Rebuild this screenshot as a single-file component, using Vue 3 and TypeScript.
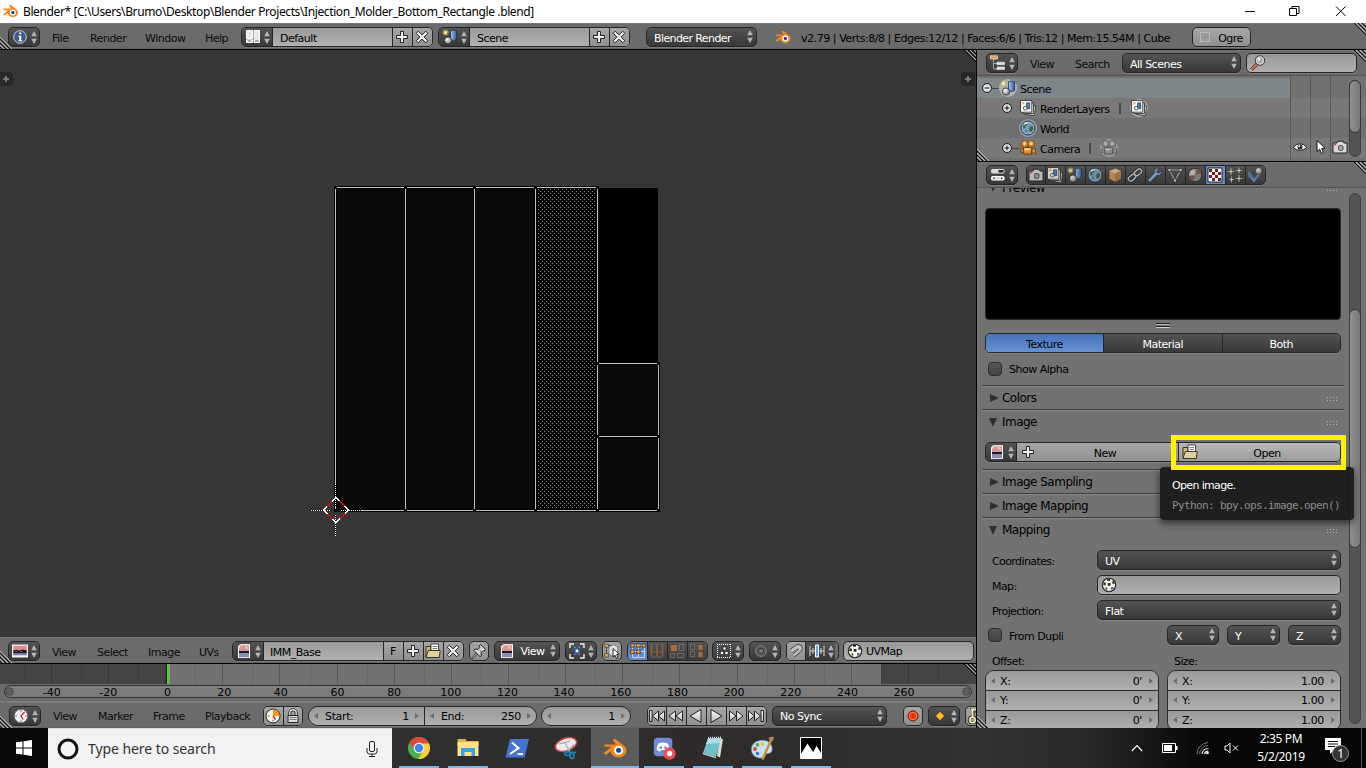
<script setup lang="ts">
import { h, type FunctionalComponent } from 'vue'

const Ic: FunctionalComponent<{ n: string }> = (props) =>
  h('svg', { class: ['ic', 'ic-' + props.n], viewBox: '0 0 16 16' }, [h('use', { href: '#' + props.n })])
Ic.props = ['n']

const Ud: FunctionalComponent = () =>
  h('svg', { class: 'ud', viewBox: '0 0 6 13' }, [h('path', { d: 'M3 0L5.8 5.2H.2zM3 13L5.8 7.8H.2z', fill: '#b4b4b4' })])

const infoMenus = ['File', 'Render', 'Window', 'Help']
const uvMenus = ['View', 'Select', 'Image', 'UVs']
const timeMenus = ['View', 'Marker', 'Frame', 'Playback']
const propTabs = ['photocam', 'layers', 'scene', 'world', 'cube', 'chain', 'wrench', 'mesh', 'material', 'texture', 'particles', 'physics']
const transport = ['first', 'rew', 'back', 'play', 'fwd', 'last']
const axes = ['X', 'Y', 'Z']

const frameX = (f: number) => 166.7 + f * 2.857
const labelX = (f: number) => 167.5 + f * 2.833 - (f < 0 ? 2.5 : 0)
const labels = Array.from({ length: 16 }, (_, i) => -40 + i * 20)
const minorFrames = Array.from({ length: 17 }, (_, i) => -50 + i * 20)

const vLines = [[335, 187, 510], [405, 187, 510], [474, 187, 510], [535, 187, 510], [597, 187, 510], [658, 363, 510]]
const hLines = [[187, 335, 597], [510, 335, 658], [363, 597, 658], [436, 597, 658]]
const verts = [
  [335, 187], [405, 187], [474, 187], [535, 187], [597, 187],
  [335, 510], [405, 510], [474, 510], [535, 510], [597, 510], [658, 510],
  [597, 363], [658, 363], [597, 436], [658, 436],
]

const apps = [
  { n: 'chrome', open: true }, { n: 'explorer', open: true }, { n: 'shell', open: false },
  { n: 'snip', open: false }, { n: 'blender', open: true, active: true }, { n: 'discord', open: true },
  { n: 'notepad', open: true }, { n: 'paint', open: true }, { n: 'photos', open: true },
]
</script>

<template>
  <div class="screen">
    <svg class="defs" width="0" height="0">
      <defs>
        <linearGradient id="gw" x1="0" y1="0" x2="0" y2="1"><stop offset="0" stop-color="#fff" /><stop offset="1" stop-color="#bbb" /></linearGradient>
        <linearGradient id="gb" x1="0" y1="0" x2="1" y2="0"><stop offset="0" stop-color="#a9c8f0" /><stop offset="1" stop-color="#2b5c9e" /></linearGradient>
        <linearGradient id="go" x1="0" y1="0" x2="0" y2="1"><stop offset="0" stop-color="#f7b45c" /><stop offset="1" stop-color="#c8741e" /></linearGradient>
        <radialGradient id="gs" cx=".35" cy=".3" r=".8"><stop offset="0" stop-color="#fff" /><stop offset="1" stop-color="#777" /></radialGradient>
        <pattern id="stipple" width="4" height="4" patternUnits="userSpaceOnUse" x="2" y="1">
          <rect width="1" height="1" fill="#8c8c8c" /><rect x="2" y="2" width="1" height="1" fill="#8c8c8c" />
        </pattern>
      </defs>
      <symbol id="blender" viewBox="0 0 16 16">
        <path d="M6.4 2.600 8 1.800 13.400 6C15 7.200 15.600 8.300 15.600 9.600c0 2.700-2.300 4.600-5.200 4.600-2.800 0-4.900-1.600-5.200-3.900L1.900 12.600.5 11.400 5.600 7.200H1V5.600h7.700z" fill="#f5861f" />
        <circle cx="10.400" cy="9.500" r="3" fill="#fff" /><circle cx="10.400" cy="9.500" r="1.700" fill="#1a4f8c" />
      </symbol>
      <symbol id="info" viewBox="0 0 16 16">
        <circle cx="8" cy="8" r="6.300" fill="#3d5a94" stroke="#c8cfdb" stroke-width="1" />
        <path d="M7 3.200h2.500v2.200H7zM6 6.500h3.500v4.500h1v1.500h-4.500V11H7V8H6z" fill="#fff" stroke="#111" stroke-width=".3" />
      </symbol>
      <symbol id="screens" viewBox="0 0 16 16">
        <path d="M1.500 1.500h6v8h-6zM9 1.500h5.500v12H9zM1.500 10.800h6v2.700h-6z" fill="#e9e9e4" stroke="#fff" /><path d="M3 12h3M10 12h3.500" stroke="#666" />
      </symbol>
      <symbol id="plus" viewBox="0 0 16 16"><path d="M6.500 2.500h3v4h4v3h-4v4h-3v-4h-4v-3h4z" fill="#eee" stroke="#222" /></symbol>
      <symbol id="cross" viewBox="0 0 16 16"><path d="M4.300 2.200 8 5.900l3.700-3.700 2.100 2.100L10.100 8l3.700 3.700-2.100 2.100L8 10.100l-3.700 3.700-2.100-2.100L5.900 8 2.200 4.300z" fill="#eee" stroke="#222" /></symbol>
      <symbol id="scene" viewBox="0 0 16 16">
        <path d="M8.500 1.800q3-1.400 6 0v8.700q-3 2-6 0z" fill="url(#gb)" stroke="#1d3558" stroke-width=".8" />
        <circle cx="3.500" cy="3.500" r="3" fill="#d9cd4a" opacity=".55" /><circle cx="3.500" cy="3.500" r="1.500" fill="#fff6a0" />
        <circle cx="6" cy="11.500" r="3.600" fill="url(#gs)" stroke="#222" stroke-width=".8" />
      </symbol>
      <symbol id="tree" viewBox="0 0 16 16">
        <path d="M3.500 4v10H8M3.500 8.500H8" fill="none" stroke="#9aa" /><path d="M.5.8h7v3.200h-7z" fill="#e79a4c" stroke="#ffe0b8" stroke-width=".7" />
        <path d="M7 7.200h7.500v2.600H7zM7 12h7.500v2.600H7z" fill="#ddd" stroke="#fff" stroke-width=".5" />
      </symbol>
      <symbol id="mag" viewBox="0 0 16 16">
        <path d="M7 9 1.500 14.600" stroke="#5a2c14" stroke-width="3.400" /><path d="M7 9 1.700 14.400" stroke="#c98058" stroke-width="2" />
        <circle cx="10" cy="5.500" r="4.700" fill="#c9c9c9" stroke="#333" /><circle cx="10" cy="5.500" r="3.600" fill="#a9a9a9" stroke="#eee" stroke-width=".8" /><circle cx="9" cy="4.500" r="1.200" fill="#fff" />
      </symbol>
      <symbol id="layers" viewBox="0 0 16 16">
        <path d="M6.500 5l9 1-1 9.500-9-1z" fill="#e8e8d8" stroke="#222" stroke-width=".8" /><path d="M3 2.800h10.500v10.700H3z" fill="#eee" stroke="#222" stroke-width=".8" />
        <path d="M.6.600h11.200v11.600H.6z" fill="#fff" stroke="#222" stroke-width=".8" /><path d="M6.500 2.800h3.300v6H6.500z" fill="#4b7dbb" stroke="#123" stroke-width=".6" />
        <circle cx="5.200" cy="8.200" r="1.900" fill="#eee" stroke="#123" stroke-width=".7" /><circle cx="3.300" cy="3.300" r="1.200" fill="#e9b53a" />
      </symbol>
      <symbol id="world" viewBox="0 0 16 16">
        <circle cx="8" cy="8" r="7" fill="#a9bed6" stroke="#222c3c" /><circle cx="8" cy="8" r="5.500" fill="#6f9bca" />
        <path d="M3 6q1-3.500 5-3l-1 2-2 1 .5 2-2 .5zM9.500 7l3-1.500 1 3.500-2.500 3.200L9 10zM5 10l2 1v2z" fill="#3c6b2a" /><path d="M4 4.500q2-2 4-1.500" stroke="#fff" stroke-width="1.200" fill="none" />
      </symbol>
      <symbol id="camera" viewBox="0 0 16 16">
        <circle cx="4.600" cy="4" r="3.500" fill="url(#go)" stroke="#6b3a08" stroke-width=".8" /><circle cx="11.200" cy="4" r="3.500" fill="url(#go)" stroke="#6b3a08" stroke-width=".8" />
        <path d="M3.500 7.500h8v6.700h-8z" fill="url(#go)" stroke="#6b3a08" stroke-width=".8" /><path d="M12 10l3.500-1.800v6L12 12.500zM3 9.500 .8 8.700v4L3 12" fill="url(#go)" stroke="#6b3a08" stroke-width=".8" />
        <circle cx="4.600" cy="4" r="1.100" fill="#fff0c8" /><circle cx="11.200" cy="4" r="1.100" fill="#fff0c8" /><path d="M5 9.500h4" stroke="#fff0c8" />
      </symbol>
      <symbol id="eye" viewBox="0 0 16 16"><path d="M1 8.500Q8 1 15 8.500 8 14 1 8.500z" fill="#f2f2f2" stroke="#222" /><circle cx="8" cy="8" r="2.500" fill="#333" /><circle cx="7.300" cy="7.200" r=".9" fill="#fff" /></symbol>
      <symbol id="cursor" viewBox="0 0 16 16"><path d="M5 1.500v11l2.600-2.300 1.800 4.300 2-1-1.800-4 3.400-.4z" fill="#fff" stroke="#111" /></symbol>
      <symbol id="photocam" viewBox="0 0 16 16">
        <path d="M1 4h4l1-1.800h5L12 4h3v10H1z" fill="#d8d8d8" stroke="#222" /><circle cx="8.700" cy="9" r="3.700" fill="#555" stroke="#eee" /><circle cx="8.700" cy="9" r="2" fill="#aaa" /><path d="M2.200 5.500h2" stroke="#b33" stroke-width="1.500" />
      </symbol>
      <symbol id="props" viewBox="0 0 16 16"><rect x="1" y="2" width="13.500" height="4.500" rx="1.800" fill="#ddd" /><rect x="8.500" y="3" width="5" height="2.500" fill="#222" /><rect x="1" y="9" width="13.500" height="4.500" rx="1.800" fill="#fff" /><path d="M4.500 10 2.500 11.200l2 1.300zM11 10l2 1.200-2 1.300z" fill="#222" /><path d="M5 10h5.500v2.500H5z" fill="#ddd" /></symbol>
      <symbol id="cube" viewBox="0 0 16 16"><path d="M2 4 8.500 1.500 14 4v8l-6 3-6-3z" fill="#d2965a" stroke="#56341a" stroke-width=".8" /><path d="M2 4 8 6.500 14 4 8.500 1.500z" fill="#ecc08c" /><path d="M8 6.500 14 4v8l-6 3z" fill="#b57c46" /></symbol>
      <symbol id="chain" viewBox="0 0 16 16"><g fill="none" stroke="#222" stroke-width="3.300"><rect x="7" y="3" width="8" height="4.600" rx="2.300" transform="rotate(-40 11 5.300)" /><rect x="1" y="8.400" width="8" height="4.600" rx="2.300" transform="rotate(-40 5 10.700)" /></g><g fill="none" stroke="#c8c8c8" stroke-width="1.500"><rect x="7" y="3" width="8" height="4.600" rx="2.300" transform="rotate(-40 11 5.300)" /><rect x="1" y="8.400" width="8" height="4.600" rx="2.300" transform="rotate(-40 5 10.700)" /></g></symbol>
      <symbol id="wrench" viewBox="0 0 16 16"><path d="M14.500 3.500 12 6 10 5.800 9.800 3.800 12.200 1.300Q8.800.500 7.500 3q-.6 1.500 0 3L1 12.500q-.5 1.800 1.500 2.300.6.200 1.200-.3L10 8.300q4.800.8 4.500-4.800z" fill="#8fb0d8" stroke="#1f3450" stroke-width=".8" /></symbol>
      <symbol id="mesh" viewBox="0 0 16 16"><path d="M2.500 3H13.500L8 13.500z" fill="none" stroke="#b0b0b0" stroke-width="1.100" /><path d="M1 1.500h3v3H1zM12 1.500h3v3h-3zM6.500 12h3v3h-3z" fill="#ddd" stroke="#222" stroke-width=".7" /></symbol>
      <symbol id="material" viewBox="0 0 16 16"><circle cx="8" cy="8" r="6.700" fill="#b1a6a4" stroke="#222" /><path d="M8.500 8 9 1.500A6.300 6.300 0 0 1 14.300 7zM8.500 8 7 14.300A6.300 6.300 0 0 1 1.700 9z" fill="#7b5a56" /><path d="M8.500 8 14.300 8A6.300 6.300 0 0 1 8 14.300z" fill="#8e8a8a" /><circle cx="5.500" cy="5.500" r="2.300" fill="#e3d9d7" opacity=".8" /></symbol>
      <symbol id="texture" viewBox="0 0 16 16"><path d="M1 1h14v14H1z" fill="#fff" stroke="#222" /><path d="M2 2h3v3H2zM8 2h3v3H8zM5 5h3v3H5zM11 5h3v3h-3zM2 8h3v3H2zM8 8h3v3H8zM5 11h3v3H5zM11 11h3v3h-3z" fill="#7c1c18" /></symbol>
      <symbol id="particles" viewBox="0 0 16 16"><g stroke="#c6b48c" stroke-width="1.100"><path d="M4 1v7M.5 4.500h7M12 .5v6M9 3.500h6M4.500 9.500v6M2 12.500h5M12 8v7M8.500 11.500h7" /></g><g fill="#eee"><circle cx="4" cy="4.500" r="1" /><circle cx="12" cy="3.500" r="1" /><circle cx="4.500" cy="12.500" r="1" /><circle cx="12" cy="11.500" r="1" /></g></symbol>
      <symbol id="physics" viewBox="0 0 16 16"><path d="M1.500 5 7 13.500 13 6" fill="none" stroke="#5f84b5" stroke-width="2.500" /><path d="M1 8.500 7 14" stroke="#88a7d0" /><circle cx="11.800" cy="4" r="3.300" fill="url(#gs)" stroke="#333" stroke-width=".6" /></symbol>
      <symbol id="imgwide" viewBox="0 0 16 16"><path d="M0 1.500h16v13H0z" fill="#f4eeee" /><path d="M1.200 2.700h13.600v5H1.200z" fill="#dc8e8a" /><path d="M1.200 7.500l3-.7 3 .8 4-1 3.600.8v2.600H1.200z" fill="#16162a" /><path d="M1.200 10h13.600v2.200H1.200z" fill="#787ba6" /><path d="M3 8.500h2M8 8.500h2" stroke="#b14c52" /></symbol>
      <symbol id="image" viewBox="0 0 16 16"><path d="M4.500.7h10v14.600h-13V4z" fill="#fff" stroke="#222" stroke-width=".7" /><path d="M5.200 2.200h7.800V8H3V5z" fill="#dc9793" /><path d="M3 8h10v2.400H3z" fill="#1b1830" /><path d="M3 10.400h10V14H3z" fill="#8b8db8" /><path d="M1.500 4l3-3.300V4z" fill="#fff" stroke="#888" stroke-width=".4" /><path d="M9 4h2v2" stroke="#f8ddd6" fill="none" /></symbol>
      <symbol id="folder" viewBox="0 0 16 16"><path d="M1 3.500h5v11H1z" fill="#c9b97d" stroke="#3b3520" /><path d="M6 1h7.500v8H6z" fill="#fff" stroke="#222" stroke-width=".8" /><path d="M7.500 3.500h4.500M7.500 5.500h4.500" stroke="#555" stroke-width=".8" /><path d="M3.300 7.500h11.900l-.9 7H1z" fill="#dfd29c" stroke="#3b3520" /></symbol>
      <symbol id="pin" viewBox="0 0 16 16"><path d="M7.500 9 1 15.500" stroke="#222" stroke-width="2" /><path d="M7.500 9 1.500 15" stroke="#ddd" /><path d="M9.500 1.500 14.800 6.500 13 8l-1-.3-2 2 .4 3L9 13.500 2.800 7.500 4 6l3 .4 2-2.200-.9-1z" fill="#d6d6d6" stroke="#222" /><path d="M8 6.500 10.500 9" stroke="#777" /></symbol>
      <symbol id="pivot" viewBox="0 0 16 16"><path d="M1 5V1h4M11 1h4v4M15 11v4h-4M5 15H1v-4" fill="none" stroke="#eee" stroke-width="1.400" /><circle cx="8" cy="8" r="2.300" fill="#fff" stroke="#2c64b5" stroke-width="1.800" /><path d="M5 4.500h1.500M9.500 4.500H11M5 11.500h1.500M9.500 11.500H11" stroke="#999" /></symbol>
      <symbol id="sync" viewBox="0 0 16 16"><path d="M5 4 9 1.500l4.500 2V11L9 13.500 5 11z" fill="#e2e2e2" stroke="#777" stroke-width=".8" /><path d="M2.500 4v9M4 2.500h4" stroke="#555" /><path d="M.8 1h3.500v3.500H.8zM.8 10.500h3.500V14H.8z" fill="#f6a850" stroke="#543" stroke-width=".8" /><path d="M9 5.500v8.500l2-1.800 1.500 3.200 1.600-.7-1.400-3.200 2.600-.3z" fill="#fff" stroke="#111" stroke-width=".9" /></symbol>
      <symbol id="mvert" viewBox="0 0 16 16"><path d="M2.500 2.500v12h12v-12zM2.500 8.500h12M8.500 2.500v12" fill="none" stroke="#c3d3ee" stroke-width="1" /><path d="M.7.700h3.500v3.500H.7zM6.700.700h3.500v3.500H6.700zM12.300.700h3v3.500h-3zM.7 7h3.500v3.500H.7zM6.700 7h3.500v3.500H6.700z" fill="#f6a04c" stroke="#4c2b0c" stroke-width=".8" /></symbol>
      <symbol id="medge" viewBox="0 0 16 16"><path d="M2 14h12M2 9h12" fill="none" stroke="#777" /><path d="M2.500 1v12M8 1v12M13.500 1v12" stroke="#9c623c" stroke-width="1.700" /></symbol>
      <symbol id="mface" viewBox="0 0 16 16"><path d="M1.500 10.500h4v4h-4zM10.500 1.500h4v6h-4zM8.500 10.500h6v4h-6z" fill="#454545" stroke="#777" /><path d="M1.500 1.500h7v7h-7z" fill="#b07a48" stroke="#684329" /></symbol>
      <symbol id="misle" viewBox="0 0 16 16"><path d="M1.500 1.500h4v5h-4zM1.500 8.500h4v5h-4z" fill="#454545" stroke="#777" /><path d="M9 1.500h5v6H9zM9 8.500h5v6H9z" fill="#b07a48" stroke="#684329" /></symbol>
      <symbol id="sticky" viewBox="0 0 16 16"><path d="M1 1.500h14M1 14.500h14M1.500 1v14M14.500 1v14" fill="none" stroke="#fff" stroke-dasharray="1 1" /><path d="M7 4h3v3H7zM4.500 8.500h3v3h-3zM9 8.500h3v3H9z" fill="#fff" stroke="#111" stroke-width=".6" /></symbol>
      <symbol id="prop" viewBox="0 0 16 16"><circle cx="8" cy="8" r="5.500" fill="#5e5e5e" stroke="#7a7a7a" /><circle cx="8" cy="8" r="2.700" fill="#777" stroke="#393939" /></symbol>
      <symbol id="magnet" viewBox="0 0 16 16"><path d="M2 6.500 7.500 2.300Q12-.2 14 3.500q1.400 3.500-2 6L6.500 14" fill="none" stroke="#444" stroke-width="1" /><path d="M3.300 8 8.500 4.300Q11 2.800 12 4.800q.7 1.800-1.300 3.300L5.500 12" fill="none" stroke="#c2c2c2" stroke-width="2.600" /><path d="M4.500 9.500 9 6.300q1.300-.7 1.500 0 0 .7-.7 1.300L5 11" fill="none" stroke="#555" stroke-width=".8" /></symbol>
      <symbol id="incr" viewBox="0 0 16 16"><path d="M.5 8h15M1 3v10M4 5v6M12 5v6M15 3v10" stroke="#ccc" stroke-width="1.100" /><path d="M6.500 2h3v12h-3z" fill="#64a0ef" stroke="#fff" /></symbol>
      <symbol id="ball" viewBox="0 0 16 16"><circle cx="8" cy="8" r="6.700" fill="#faf7e8" stroke="#222" stroke-width="1.100" /><path d="M6 2h3v1.800H6zM2.500 5.500h2.300v2.700H2.300zM6.700 6h2.800v2.800H6.700zM11.300 4.200h1.700l.8 2.600h-2.500zM4.200 10.500h2v2.200L4.800 12.200zM10.200 10.300h2.300l-1.300 2.200h-1z" fill="#262a33" /><path d="M13.500 9.500q-1.500 4-5 4.300" stroke="#7ba2d8" stroke-width="1" fill="none" /></symbol>
      <symbol id="clock" viewBox="0 0 16 16"><circle cx="8" cy="8" r="6.800" fill="#f2f2f2" stroke="#666" /><path d="M8 2.300v1.500M8 12.200v1.500M2.300 8h1.500M12.200 8h1.500" stroke="#555" /><path d="M11.500 4 8 8l2 3.500" fill="none" stroke="#c22" stroke-width="1.300" /></symbol>
      <symbol id="clockpie" viewBox="0 0 16 16"><circle cx="8" cy="8" r="7" fill="#f6f1e7" stroke="#222" /><path d="M8 8V1.400A6.600 6.600 0 0 1 14.600 8z" fill="#f5961c" /><path d="M3 8h1.500M8 12v1.500" stroke="#555" /><path d="M8 8l2.500 3.500" stroke="#c22" stroke-width="1.300" /></symbol>
      <symbol id="lock" viewBox="0 0 16 16"><path d="M4.800 8V5a3.200 3.200 0 0 1 6.400 0v3" fill="none" stroke="#222" stroke-width="3" /><path d="M4.800 8V5a3.200 3.200 0 0 1 6.400 0v3" fill="none" stroke="#ddd" stroke-width="1.400" /><path d="M3 7.500h10v7H3z" fill="#ddd" stroke="#222" /><path d="M4.500 9.500h7M4.500 11.500h7" stroke="#777" /></symbol>
      <symbol id="play" viewBox="0 0 16 16"><path d="M3 1.500 14 8 3 14.500z" fill="url(#gw)" stroke="#222" /></symbol>
      <symbol id="back" viewBox="0 0 16 16"><path d="M13 1.500 2 8l11 6.500z" fill="url(#gw)" stroke="#222" /></symbol>
      <symbol id="fwd" viewBox="0 0 16 16"><path d="M1.500 3 8 8l-6.500 5zM8.500 3l6.500 5-6.500 5z" fill="url(#gw)" stroke="#222" /></symbol>
      <symbol id="rew" viewBox="0 0 16 16"><path d="M14.500 3 8 8l6.500 5zM7.500 3 1 8l6.500 5z" fill="url(#gw)" stroke="#222" /></symbol>
      <symbol id="first" viewBox="0 0 16 16"><path d="M.5 2.500h2.500v11H.5zM15.500 3 9.500 8l6 5zM9.500 3 3.500 8l6 5z" fill="url(#gw)" stroke="#222" /></symbol>
      <symbol id="last" viewBox="0 0 16 16"><path d="M13 2.500h2.500v11H13zM.5 3l6 5-6 5zM6.500 3l6 5-6 5z" fill="url(#gw)" stroke="#222" /></symbol>
      <symbol id="rec" viewBox="0 0 16 16"><circle cx="8" cy="8" r="5" fill="#e8340c" stroke="#7a1a06" /><circle cx="8" cy="8" r="3.700" fill="none" stroke="#ff9a6c" stroke-width=".8" /></symbol>
      <symbol id="diamond" viewBox="0 0 16 16"><path d="M8 3.300 12.700 8 8 12.700 3.300 8z" fill="#ffb92e" stroke="#30240c" stroke-width=".8" /></symbol>
      <symbol id="key" viewBox="0 0 16 16"><path d="M4 0h6v3H7v7.500" fill="none" stroke="#443" stroke-width="3.500" /><circle cx="6.500" cy="12" r="3.300" fill="none" stroke="#443" stroke-width="3" /><path d="M5 1.500h5M6.500 1v8" fill="none" stroke="#f3edb5" stroke-width="1.800" /><circle cx="6.500" cy="12" r="2.700" fill="none" stroke="#f3edb5" stroke-width="1.600" /></symbol>

      <symbol id="chrome" viewBox="0 0 24 24"><circle cx="12" cy="12" r="11" fill="#4bae4f" /><path d="M2.500 6.500A11 11 0 0 1 22 7.500H12L7.500 14z" fill="#e2473b" /><path d="M22 7.500A11 11 0 0 1 11.300 23l5-8.500L15.500 7.500z" fill="#fccd3a" /><circle cx="12" cy="12" r="5.400" fill="#f4f4f4" /><circle cx="12" cy="12" r="4.200" fill="#4285f4" /></symbol>
      <symbol id="explorer" viewBox="0 0 24 24"><path d="M1.500 3h8l1 2h12v5h-21z" fill="#e6b347" /><path d="M1.500 6h21v14h-21z" fill="#ffe08a" /><path d="M5 20v-8h14v8h-3.500v-4h-7v4z" fill="#35a5e5" /></symbol>
      <symbol id="shell" viewBox="0 0 24 24"><path d="M5 3h19l-4.500 18.500H.5z" fill="#4374d2" /><path d="M7 6.500l6.500 5.700L5 18" fill="none" stroke="#fff" stroke-width="2" /><path d="M12.500 18h5.500" stroke="#fff" stroke-width="1.800" /></symbol>
      <symbol id="snip" viewBox="0 0 24 24"><ellipse cx="12" cy="8.500" rx="11" ry="6.300" fill="#ecebeb" stroke="#cf3d3d" stroke-width="1.500" transform="rotate(-18 12 8.500)" /><path d="M5 8l11-3" stroke="#999" /><path d="M11 7l6 11M20 8.500l-7.500 8" stroke="#a4b2bd" stroke-width="1.400" /><g fill="none" stroke="#1782bb" stroke-width="1.700"><ellipse cx="13.500" cy="17.500" rx="2.700" ry="1.900" /><ellipse cx="18" cy="20" rx="2" ry="2.600" /><path d="M17 16l5 .5" /></g></symbol>
      <symbol id="discord" viewBox="0 0 26 26"><rect x="2" y="2" width="20" height="20" rx="4" fill="#7289da" /><path d="M7 8q5-2 10 0 2 3.500 2 7-2 2-4 1.800l-1-1.500H10l-1 1.500Q7 17 5 15q0-3.500 2-7z" fill="#fff" /><circle cx="9.500" cy="12.500" r="1.500" fill="#7289da" /><circle cx="14.500" cy="12.500" r="1.500" fill="#7289da" /><circle cx="19" cy="19" r="6.700" fill="#ef4b4e" /><circle cx="19" cy="19" r="2.900" fill="#fff" /></symbol>
      <symbol id="notepad" viewBox="0 0 24 24"><path d="M22 3l-3 18.500L16 20l2.500-18z" fill="#ded7cc" /><path d="M7 2.500l13-.5-5 19L2 17z" fill="#72bfcb" /><path d="M7 2.500l13-.5-1.500 5L5 8z" fill="#abe0e5" /><path d="M7 1.700l13-.4" stroke="#e8e8e8" stroke-width="1.500" stroke-dasharray="1 1" /><path d="M2 17l13 4.300-.3 1L1.500 18z" fill="#dce5e5" /></symbol>
      <symbol id="paint" viewBox="0 0 24 24"><path d="M10 4.500C16 3 23 7 22 14c-.5 4-4 3-6 4s-1 4-5 4C5 22 1 18 1.500 12.500 2 8 5 5.500 10 4.500z" fill="#c3e1f2" stroke="#6898b8" stroke-width=".7" /><circle cx="5" cy="13" r="1.900" fill="#d6422f" /><circle cx="7.500" cy="8.800" r="1.900" fill="#62ad35" /><circle cx="12.500" cy="7.800" r="1.700" fill="#edbf27" /><circle cx="7.500" cy="17.500" r="1.800" fill="#3774c9" /><path d="M21.500 3 12.500 23.500" stroke="#d58b35" stroke-width="2.400" /><path d="M20 5l-1.500-3.500Q21 .5 24 .7L23 5z" fill="#b48358" /></symbol>
      <symbol id="photos" viewBox="0 0 24 24"><path d="M1.500 1.500h21v21h-21z" fill="#000" stroke="#fff" stroke-width="1" /><path d="M2 18 8.500 7.500 13 14.500l1.200 1.200 3.300-6 4.500 7.300v5.500H2z" fill="#fff" /><path d="M14 15.500l2.200-4" stroke="#000" stroke-width=".8" /></symbol>
      <symbol id="hatch" viewBox="0 0 12 12"><path d="M0 0l12 12M4 0l8 8M8 0l4 4" stroke="#111" stroke-width="1" /><path d="M2 0l10 10M6 0l6 6M10 0l2 2" stroke="#b4b4b4" stroke-width="1" /></symbol>
      <symbol id="hatchb" viewBox="0 0 12 12"><path d="M0 0l12 12M0 4l8 8M0 8l4 4" stroke="#b4b4b4" stroke-width="1" /><path d="M0 2l10 10M0 6l6 6M0 10l2 2" stroke="#111" stroke-width="1" /></symbol>
    </svg>

    <header class="title">
      <Ic n="blender" />
      <span class="title-text">Blender* [C:\Users\Brumo\Desktop\Blender Projects\Injection_Molder_Bottom_Rectangle .blend]</span>
      <svg class="winbtns" width="116" height="20" viewBox="0 0 116 20"><g fill="none" stroke="#000"><path d="M5 9.500h10" /><path d="M49.500 6.500h7v7h-7zM52 6.500V4.500h7v7H57" /><path d="M96 4.500l9.500 9.500M105.500 4.500 96 14" /></g></svg>
    </header>

    <div class="bar info-bar">
      <button class="w dark type"><Ic n="info" /><Ud /></button>
      <span v-for="m in infoMenus" :key="m" class="menu">{{ m }}</span>
      <div class="group"><button class="dark type"><Ic n="screens" /><Ud /></button><span class="field">Default</span><button class="tool"><Ic n="plus" /></button><button class="tool"><Ic n="cross" /></button></div>
      <div class="group"><button class="dark type"><Ic n="scene" /><Ud /></button><span class="field">Scene</span><button class="tool"><Ic n="plus" /></button><button class="tool"><Ic n="cross" /></button></div>
      <button class="w dark drop"><span>Blender Render</span><Ud /></button>
      <Ic n="blender" class="logo" />
      <span class="stats">v2.79 | Verts:8/8 | Edges:12/12 | Faces:6/6 | Tris:12 | Mem:15.54M | Cube</span>
      <button class="w tool ogre"><i></i><span>Ogre</span></button>
      <svg class="hatch tr"><use href="#hatch" /></svg><svg class="hatch bl"><use href="#hatchb" /></svg>
    </div>

    <main class="work">
      <section class="left">
        <div class="uv">
          <svg width="976" height="587" viewBox="0 50 976 587" shape-rendering="crispEdges">
            <rect x="335" y="188" width="323" height="323" fill="#000" />
            <path d="M336 188h199v322H336zM598 364h60v146h-60z" fill="#0a0a0a" />
            <rect x="538" y="189" width="58" height="320" fill="url(#stipple)" />
            <rect v-for="(l, i) in vLines" :key="'vo' + i" :x="l[0] - 1" :y="l[1] - 1" width="3" :height="l[2] - l[1] + 3" fill="#000" />
            <rect v-for="(l, i) in hLines" :key="'ho' + i" :x="l[1] - 1" :y="l[0] - 1" :width="l[2] - l[1] + 3" height="3" fill="#000" />
            <rect v-for="(l, i) in vLines" :key="'v' + i" :x="l[0]" :y="l[1]" width="1" :height="l[2] - l[1] + 1" fill="#c0c0c0" />
            <rect v-for="(l, i) in hLines" :key="'h' + i" :x="l[1]" :y="l[0]" :width="l[2] - l[1] + 1" height="1" fill="#c0c0c0" />
            <rect v-for="(v, i) in verts" :key="'p' + i" :x="v[0] - 1" :y="v[1] - 1" width="3" height="3" fill="#000" />
            <path d="M310 510.500h21M336 510.500h26M335.500 484v22M335.500 515v21" stroke="#000" fill="none" />
            <path d="M311 510.500h20M341 510.500h21M335.500 484v22M335.500 515v21" stroke="#fff" stroke-dasharray="1 1" fill="none" />
            <path d="M336 497.500 348.500 510 336 522.500 323.500 510z" fill="none" stroke="#fff" />
            <path d="M336 497.500 348.500 510 336 522.500 323.500 510z" fill="none" stroke="#f00000" stroke-dasharray="7 10.680" stroke-dashoffset="-5" />
          </svg>
          <svg class="tab tab-l" width="13" height="14" viewBox="0 0 13 14"><path d="M3 7h6M6 4v6" stroke="#8a8a8a" stroke-width="1.600" /></svg>
          <svg class="tab tab-r" width="14" height="14" viewBox="0 0 14 14"><path d="M4 7h6M7 4v6" stroke="#8a8a8a" stroke-width="1.600" /></svg>
          <svg class="hatch tr"><use href="#hatch" /></svg>
        </div>

        <div class="bar uv-bar">
          <button class="w dark type"><Ic n="imgwide" /><Ud /></button>
          <span v-for="m in uvMenus" :key="m" class="menu">{{ m }}</span>
          <div class="group"><button class="dark type"><Ic n="image" /><Ud /></button><span class="field">IMM_Base</span><button class="tool f"><span>F</span></button><button class="tool"><Ic n="plus" /></button><button class="tool"><Ic n="folder" /></button><button class="tool"><Ic n="cross" /></button></div>
          <button class="w tool"><Ic n="pin" /></button>
          <button class="w dark drop mode"><Ic n="image" /><span>View</span><Ud /></button>
          <button class="w dark type"><Ic n="pivot" /><Ud /></button>
          <button class="w tool"><Ic n="sync" /></button>
          <div class="group modes"><button class="tool on"><Ic n="mvert" /></button><button class="tool"><Ic n="medge" /></button><button class="tool"><Ic n="mface" /></button><button class="tool"><Ic n="misle" /></button></div>
          <button class="w dark type"><Ic n="sticky" /><Ud /></button>
          <button class="w dark type"><Ic n="prop" /><Ud /></button>
          <div class="group snap"><button class="tool"><Ic n="magnet" /></button><button class="dark type"><Ic n="incr" /><Ud /></button></div>
          <span class="w uvmap"><Ic n="ball" /><span>UVMap</span></span>
          <svg class="hatch bl"><use href="#hatchb" /></svg>
        </div>

        <div class="timeline">
          <svg width="976" height="38" viewBox="0 0 976 38">
            <rect width="976" height="21" fill="#727272" />
            <rect width="166" height="21" fill="#444" /><rect x="881" width="95" height="21" fill="#444" />
            <rect v-for="f in minorFrames" :key="'n' + f" :x="Math.round(frameX(f))" y="0" width="1" height="20" fill="#000" opacity=".09" />
            <rect v-for="f in labels" :key="'m' + f" :x="Math.floor(frameX(f)) - 1" y="0" width="1" height="20" fill="#000" opacity=".22" />
            <rect x="166" width="1" height="21" fill="#222" /><rect x="167" y="0" width="3" height="21" fill="#5fc244" />
            <rect y="20" width="976" height="18" fill="#6b6b6b" />
            <rect x="4.500" y="21.500" width="967" height="12" rx="6" fill="#7b7b7b" stroke="#353535" /><path d="M10 23.500h956" stroke="#858585" />
            <circle cx="9.500" cy="27.500" r="3.800" fill="#5f5f5f" stroke="#4a4a4a" /><circle cx="966.500" cy="27.500" r="3.800" fill="#5f5f5f" stroke="#4a4a4a" />
            <text v-for="f in labels" :key="'t' + f" :x="labelX(f)" y="31.500" text-anchor="middle" class="tick">{{ f }}</text>
            <path d="M0 37.500h976" stroke="#808080" />
          </svg>
          <svg class="hatch tr"><use href="#hatch" /></svg>
        </div>

        <div class="bar time-bar">
          <button class="w dark type"><Ic n="clock" /><Ud /></button>
          <span v-for="m in timeMenus" :key="m" class="menu">{{ m }}</span>
          <div class="group two"><button class="tool"><Ic n="clockpie" /></button><button class="tool"><Ic n="lock" /></button></div>
          <div class="group range"><span class="num"><b class="al"></b><span>Start:</span><em>1</em><b class="ar"></b></span><span class="num"><b class="al"></b><span>End:</span><em>250</em><b class="ar"></b></span></div>
          <span class="w num cur"><b class="al"></b><em>1</em><b class="ar"></b></span>
          <div class="group six"><button v-for="t in transport" :key="t" class="tool"><Ic :n="t" /></button></div>
          <button class="w dark drop"><span>No Sync</span><Ud /></button>
          <button class="w tool"><Ic n="rec" /></button>
          <button class="w dark type"><Ic n="diamond" /><Ud /></button>
          <button class="w tool keyb"><Ic n="key" /></button>
          <svg class="hatch bl"><use href="#hatchb" /></svg>
        </div>
      </section>

      <aside class="right">
        <div class="bar out-bar">
          <button class="w dark type"><Ic n="tree" /><Ud /></button>
          <span class="menu">View</span><span class="menu">Search</span>
          <button class="w dark drop"><span>All Scenes</span><Ud /></button>
          <span class="w search"><Ic n="mag" /></span>
          <svg class="hatch tr"><use href="#hatch" /></svg>
        </div>
        <div class="outliner">
          <ul>
            <li class="scene-row"><i class="exp"><svg width="9" height="9" viewBox="0 0 9 9"><path d="M2 4.500h5" /></svg></i><hr /><span class="halo"><Ic n="scene" /></span><span class="name">Scene</span></li>
            <li class="sub"><i class="exp"><svg width="9" height="9" viewBox="0 0 9 9"><path d="M2 4.500h5M4.500 2v5" /></svg></i><span class="ico gap"><Ic n="layers" /></span><span class="name">RenderLayers</span><u></u><span class="halo"><Ic n="layers" /></span></li>
            <li class="sub alt"><i class="none"></i><span class="ico gap halo2"><Ic n="world" /></span><span class="name">World</span></li>
            <li class="sub"><i class="exp"><svg width="9" height="9" viewBox="0 0 9 9"><path d="M2 4.500h5M4.500 2v5" /></svg></i><hr /><span class="ico"><Ic n="camera" /></span><span class="name">Camera</span><u></u><span class="halo grey"><Ic n="camera" /></span><span class="toggles"><Ic n="eye" /><Ic n="cursor" /><Ic n="photocam" /></span></li>
            <li class="sub alt"><i class="none"></i><span class="peek"></span><span class="peek grey-peek"></span></li>
          </ul>
          <div class="cols"></div>
          <div class="scroll"><div class="thumb"></div></div>
          <svg class="hatch bl"><use href="#hatchb" /></svg>
        </div>
        <div class="bar prop-bar">
          <button class="w dark type"><Ic n="props" /><Ud /></button>
          <div class="group tabs"><button v-for="t in propTabs" :key="t" :class="{ on: t === 'texture' }"><Ic :n="t" /></button></div>
          <svg class="hatch tr"><use href="#hatch" /></svg>
        </div>
        <div class="props">
          <div class="panels">
            <h3 class="first open">Preview<i class="grip"></i></h3>
            <div class="preview"></div>
            <div class="handle"></div>
            <div class="group seg"><button class="on">Texture</button><button>Material</button><button>Both</button></div>
            <div class="check alpha"><i></i><span>Show Alpha</span></div>
            <h3>Colors<i class="grip"></i></h3>
            <h3 class="open">Image<i class="grip"></i></h3>
            <div class="imgrow">
              <div class="group"><button class="dark type"><Ic n="image" /><Ud /></button><button class="tool wide"><Ic n="plus" /><span>New</span></button><button class="tool wide openb"><Ic n="folder" /><span>Open</span></button></div>
              <div class="mark"></div>
              <div class="tip"><p>Open image.</p><code>Python: bpy.ops.image.open()</code></div>
            </div>
            <h3>Image Sampling</h3>
            <h3>Image Mapping</h3>
            <h3 class="open">Mapping<i class="grip"></i></h3>
            <div class="form">
              <label>Coordinates:</label><button class="w dark drop"><span>UV</span><Ud /></button>
              <label>Map:</label><span class="w mapf"><Ic n="ball" /></span>
              <label>Projection:</label><button class="w dark drop"><span>Flat</span><Ud /></button>
            </div>
            <div class="dupli"><div class="check"><i></i><span>From Dupli</span></div><button v-for="a in axes" :key="a" class="w dark drop"><span>{{ a }}</span><Ud /></button></div>
            <div class="vecs">
              <div><label>Offset:</label><div class="vec"><span v-for="a in axes" :key="a" class="num"><b class="al"></b><span>{{ a }}:</span><em>0'</em><b class="ar"></b></span></div></div>
              <div><label>Size:</label><div class="vec"><span v-for="a in axes" :key="a" class="num"><b class="al"></b><span>{{ a }}:</span><em>1.00</em><b class="ar"></b></span></div></div>
            </div>
          </div>
          <div class="scroll"><div class="thumb"></div></div>
          <svg class="hatch bl"><use href="#hatchb" /></svg>
        </div>
      </aside>
    </main>

    <footer class="taskbar">
      <div class="start"><svg width="16" height="16" viewBox="0 0 16 16"><path d="M0 2.300 6.500 1.400V7.500H0zM7.500 1.200 16 0v7.500H7.500zM0 8.500h6.500v6.100L0 13.700zM7.500 8.500H16V16l-8.500-1.200z" fill="#fff" /></svg></div>
      <div class="find"><svg width="22" height="22" viewBox="0 0 22 22"><circle cx="11" cy="11" r="9" fill="none" stroke="#111" stroke-width="3" /></svg><span>Type here to search</span><svg width="12" height="18" viewBox="0 0 12 18"><g fill="none" stroke="#222"><rect x="3.500" y="1.500" width="5" height="10" rx="1.500" /><path d="M1 8v3.500q0 2.500 2.500 2.500h5q2.500 0 2.500-2.500V8M6 14v2.500M3 16.500h6" /></g></svg></div>
      <div class="apps"><div v-for="a in apps" :key="a.n" :class="['app', { open: a.open, active: a.active }]"><Ic :n="a.n" /></div></div>
      <div class="tray">
        <svg width="12" height="8" viewBox="0 0 12 8"><path d="M.8 7 6 1.500 11.200 7" fill="none" stroke="#fff" stroke-width="1.200" /></svg>
        <svg width="16" height="10" viewBox="0 0 16 10"><path d="M.5.500h13v9H.5z" fill="none" stroke="#fff" /><path d="M2 2h8v6H2zM14 3h1.500v4H14z" fill="#fff" /></svg>
        <svg width="14" height="14" viewBox="0 0 14 14"><g fill="none"><path d="M1 13A12 12 0 0 1 12 1.500M3.500 13A9 9 0 0 1 12 4.500" stroke="#777" /><path d="M6 13a6.500 6.500 0 0 1 6.500-5.500M8.500 13a4 4 0 0 1 4-3" stroke="#fff" stroke-width="1.200" /></g><circle cx="11.500" cy="12" r="1.300" fill="#fff" /></svg>
        <svg width="16" height="12" viewBox="0 0 16 12"><g fill="none" stroke="#fff"><path d="M1 4h2l3-3v10L3 8H1zM9 3.500l5 5M14 3.500l-5 5" /></g></svg>
        <div class="clockt"><span>2:35 PM</span><span>5/2/2019</span></div>
        <div class="note"><svg width="18" height="17" viewBox="0 0 18 17"><path d="M1 1h16v12h-7l-4 4v-4H1z" fill="#fff" /><path d="M4 4.500h10M4 7h10M4 9.500h7" stroke="#111" /></svg><span>1</span></div>
      </div>
    </footer>
  </div>
</template>

<style>
html, body { margin: 0; overflow: hidden; }
</style>

<style scoped>
* { box-sizing: border-box; margin: 0; padding: 0; }
.screen { width: 1366px; height: 768px; display: flex; flex-direction: column; overflow: hidden; font: 11px/21px "DejaVu Sans", sans-serif; letter-spacing: -.5px; color: #000; background: #000; }
.defs { position: absolute; }
.ic { width: 16px; height: 16px; flex: none; display: block; }
.ud { width: 6px; height: 13px; flex: none; display: block; }
button { font: inherit; letter-spacing: inherit; color: inherit; border: 0; background: none; display: flex; align-items: center; white-space: nowrap; }
.title { height: 23px; flex: none; display: flex; align-items: center; background: #fff; padding-left: 2px; font: 12px/22px "Noto Sans", "Open Sans", sans-serif; letter-spacing: -.39px; }
.title .ic { width: 17px; margin-top: -1px; }
.title-text { margin-left: 4px; white-space: nowrap; }
.winbtns { margin-left: auto; margin-right: 10px; }
.bar { position: relative; display: grid; align-items: start; background: linear-gradient(#757575 0 1px, #6b6b6b 1px 24px, #5f5f5f); height: 26px; padding-top: 4px; flex: none; overflow: hidden; }
.w, .group { height: 20px; border: 1px solid #262626; border-radius: 5px; overflow: hidden; box-shadow: 0 1px 0 rgba(255, 255, 255, .12); justify-self: start; }
.group { display: flex; }
.group > * { height: 18px; }
.group > * + * { border-left: 1px solid #262626; }
.dark { background: linear-gradient(#535353, #383838); color: #fff; }
.tool { background: linear-gradient(#a6a6a6, #909090); justify-content: center; width: 20px; flex: none; padding-right: 1px; }
.w.tool { padding-right: 0; }
.type { width: 32px; padding-left: 3px; gap: 3px; flex: none; }
.group > .type { width: 30px; }
.field { flex: 1; background: linear-gradient(#999, #b2b2b2); padding-left: 7px; line-height: 21px; }
.menu { line-height: 23px; color: #0c0c0c; white-space: nowrap; }
.drop { padding: 0 3px 0 7px; justify-content: space-between; line-height: 18px; }
.drop span { padding-top: 3px; }
.drop .ud { margin-top: -1px; }
.num { display: flex; align-items: center; background: linear-gradient(#999, #b0b0b0); padding: 1px 5px 0; line-height: 18px; letter-spacing: -.35px; }
.num em { font-style: normal; margin-left: auto; }
.al, .ar { border: 3.5px solid transparent; border-left-width: 0; border-right: 4px solid #6d6d6d; width: 0; margin-right: 5px; margin-top: -2px; flex: none; }
.ar { border-right: 0; border-left: 4px solid #6d6d6d; margin: -2px 0 0 7px; }
.hatch { position: absolute; width: 12px; height: 12px; pointer-events: none; }
.tr { top: 0; right: 0; }
.bl { bottom: 0; left: 0; }

.info-bar { height: 27px; border-bottom: 1px solid #000; padding-left: 8px; grid-template-columns: 44px 38px 55px 60px 36px 197px 208px 129px 26px 391px 60px; }
.info-bar .group { width: 192px; }
.info-bar .drop { width: 111px; letter-spacing: -.6px; }
.logo { margin-top: 2px; }
.stats { line-height: 23px; white-space: nowrap; letter-spacing: -.445px; }
.ogre { width: 59px; gap: 8px; }
.ogre span { padding-top: 3px; line-height: 18px; }
.ogre i { width: 10px; height: 10px; border: 1px solid #bbb; background: #999; }

.work { display: flex; height: 678px; flex: none; }
.left { width: 976px; height: 678px; flex: none; overflow: hidden; }
.right { width: 390px; flex: none; border-left: 1px solid #000; position: relative; }
.uv { position: relative; height: 587px; background: #363636; }
.uv svg { display: block; }
.tab { position: absolute; top: 22px; background: #282828; }
.tab-l { left: 0; border-radius: 0 4px 4px 0; }
.tab-r { right: 1px; border-radius: 4px 0 0 4px; }
.uv-bar { height: 27px; border-bottom: 1px solid #000; padding-left: 8px; grid-template-columns: 44px 45px 51px 51px 33px 237px 25px 71px 37px 25px 85px 37px 37px 57px 132px; }
.uv-bar .group { width: 232px; }
.uv-bar .field { padding-left: 6px; }
.f span { padding-top: 2px; line-height: 18px; }
.uv-bar .mode { width: 66px; padding-left: 4px; }
.mode span { padding-top: 2px; }
.uv-bar .modes { width: 81px; }
.modes .tool { background: linear-gradient(#535353, #3d3d3d); }
.modes .tool .ic { opacity: .8; }
.modes .tool.on { background: linear-gradient(#4d79c0, #6690d2); width: 19px; padding: 0; }
.modes .tool.on .ic { opacity: 1; }
.uv-bar .snap { width: 53px; }
.snap .tool { width: 18px; padding: 0; }
.uvmap { width: 131px; display: flex; align-items: center; gap: 3px; padding: 0 3px; background: linear-gradient(#999, #b0b0b0); line-height: 18px; }
.uvmap span { padding-top: 2px; }
.timeline { height: 38px; position: relative; }
.timeline svg { display: block; }
.tick { font: 11px "DejaVu Sans", sans-serif; letter-spacing: 0; }
.time-bar { padding-left: 9px; grid-template-columns: 44px 45px 55px 52px 58px 45px 233px 106px 125px 131px 25px 37px 20px; }
.time-bar .menu { line-height: 21px; }
.time-bar .drop span { padding-top: 1px; }
.time-bar .two { width: 40px; }
.two .tool:first-child { width: 19px; }
.time-bar .range { width: 229px; border-radius: 10px; }
.range .num:first-child { width: 115px; }
.range .num:last-child { flex: 1; }
.range .num { padding: 1px 5px 0; }
.cur { width: 90px; border-radius: 10px; }
.range .al { margin-right: 7px; }
.range .ar, .cur .ar { margin-left: 6px; }
.time-bar .six { width: 120px; }
.six .tool:first-child { width: 18px; padding: 0; }
.time-bar .drop { width: 115px; }
.keyb { overflow: hidden; justify-content: flex-start; }

.out-bar { padding: 3px 0 0 9px; border-bottom: 1px solid #575757; grid-template-columns: 44px 45px 47px 124px 112px; }
.out-bar .drop { width: 119px; }
.search { width: 111px; background: linear-gradient(#999, #b0b0b0); padding: 1px 3px; }
.outliner { height: 86px; position: relative; background: #717171; overflow: hidden; padding-top: 2px; border-bottom: 1px solid #000; }
ul { list-style: none; }
li { height: 20px; display: flex; align-items: center; background: #787878; line-height: 18px; }
li.alt { background: #707070; }
.name { padding-top: 3px; }
.scene-row { width: 313px; background: #7f868a; padding-left: 6px; }
.sub { padding-left: 26px; position: relative; }
.exp, .none { width: 8px; height: 8px; border-radius: 50%; outline: 1px solid #222; background: #ddd; flex: none; }
.exp svg { display: block; width: 8px; height: 8px; stroke: #111; stroke-width: 1.1; }
.none { visibility: hidden; }
hr { width: 8px; border: 0; border-top: 1px solid #444; flex: none; }
.halo, .ico { width: 18px; height: 18px; border-radius: 50%; display: grid; place-items: center; flex: none; }
.halo { background: rgba(220, 220, 220, .5); }
.scene-row .halo { margin: 0 3px 0 0; }
.ico { margin-right: 3px; }
.ico.gap { margin-left: 8px; }
.halo2 { background: rgba(200, 200, 225, .5); }
.grey { filter: grayscale(1); opacity: .65; }
u { width: 2px; height: 11px; background: #4a4a4a; margin: 0 9px 0 9px; }
.toggles { margin: -2px 18px 0 auto; display: flex; gap: 4px; position: relative; z-index: 1; }
.peek { width: 14px; height: 10px; border-radius: 7px; background: #b87e40; margin: 11px 0 0 11px; }
.grey-peek { background: #b5b5b5; margin-left: 52px; }
.cols { position: absolute; left: 313px; top: 0; bottom: 0; width: 59px; background: linear-gradient(90deg, #585858 1px, transparent 1px) 0 0 / 20px 100%; }
.scroll { position: absolute; left: 372px; top: 4px; width: 12px; height: 77px; border-radius: 6px; background: #535353; border: 1px solid #404040; }
.thumb { height: 53px; margin: -1px; border-radius: 6px; border: 1px solid #3a3a3a; background: linear-gradient(90deg, #929292, #777); }
.prop-bar { padding: 3px 0 0 9px; border-bottom: 1px solid #575757; grid-template-columns: 40px 241px; }
.tabs { width: 240px; }
.tabs button { width: 20px; background: linear-gradient(#505050, #393939); padding-left: 1px; flex: none; }
.tabs button:first-child { width: 18px; }
.tabs button .ic { opacity: .8; }
.tabs button.on { background: #5f8ad0; }
.tabs button.on .ic { opacity: 1; }
.props { position: relative; height: 540px; background: #727272; overflow: hidden; }
.panels { width: 362px; margin-left: 5px; }
h3 { font-weight: normal; font-size: 12px; line-height: 24px; height: 24px; padding-left: 20px; letter-spacing: -.52px; border-top: 1px solid #3c3c3c; box-shadow: inset 0 1px #8a8a8a; position: relative; display: flex; }
h3::before { content: ""; position: absolute; left: 8px; top: 8px; border: 4.500px solid transparent; border-left: 9px solid #2f2f2f; border-right: 0; }
h3.open::before { border: 4.500px solid transparent; border-top: 9px solid #2f2f2f; border-bottom: 0; left: 7px; top: 8px; }
h3.first { margin-top: -13px; border: 0; box-shadow: none; line-height: 26px; height: 25px; }
.grip { margin: 11px 5px 0 auto; width: 12px; height: 5px; background: conic-gradient(from 0deg at 1px 1px, transparent 270deg, #b4b4b4 0) 0 0 / 3px 3px; }
.first .grip { margin-top: 12px; }
.preview { height: 112px; margin: 8px 3px 0; background: #000; border: 1px solid #2c2c2c; border-radius: 4px; }
.handle { width: 14px; height: 5px; margin: 3px auto 5px; border-bottom: 1px solid #ccc; background: linear-gradient(#222 1px, #bbb 1px 2px, #727272 2px 3px, #222 3px); }
.panels .group { margin: 0 3px; width: 356px; }
.seg button { flex: 1; justify-content: center; color: #fff; background: linear-gradient(#525252, #393939); padding-top: 2px; }
.seg button.on { flex: none; width: 117px; background: linear-gradient(#4672ba, #6792d4); color: #000; }
.check { display: flex; align-items: center; line-height: 18px; height: 20px; padding-left: 6px; flex: none; }
.check span { padding-top: 2px; }
.check i { width: 14px; height: 14px; border: 1px solid #2c2c2c; border-radius: 4px; background: linear-gradient(#555, #434343); margin: -1px 7px 0 0; }
.alpha { margin: 6px 0; }
.imgrow { position: relative; height: 36px; padding-top: 9px; }
.wide { flex: 1; justify-content: flex-start; width: auto; padding-left: 3px; line-height: 18px; }
.wide span { flex: 1; text-align: center; padding: 3px 3px 0 0; }
.openb { background: linear-gradient(#b8b8b8, #9c9c9c); }
.mark { position: absolute; left: 189px; top: 2px; width: 175px; height: 35px; border: 5px solid #fff200; z-index: 3; }
.tip { position: absolute; left: 178px; top: 34px; width: 194px; height: 53px; background: rgba(25, 25, 25, .93); border-radius: 4px; box-shadow: 0 3px 8px rgba(0, 0, 0, .6); z-index: 2; padding: 9px 12px; color: #fff; white-space: nowrap; }
.tip p { line-height: 20px; letter-spacing: -.65px; }
.tip code { font: 11px/20px "DejaVu Sans Mono", monospace; letter-spacing: -.62px; color: #8c8c8c; display: block; }
.form { display: grid; grid-template-columns: 105px 244px; row-gap: 5px; margin: 9px 0 0 10px; }
.form label { line-height: 23px; height: 20px; display: block; letter-spacing: -.6px; }
.form .w { width: 244px; }
.mapf { background: linear-gradient(#999, #b0b0b0); padding: 1px 3px; }
.dupli { display: flex; margin-top: 5px; height: 20px; }
.dupli .check { width: 185px; }
.dupli .check span { padding-top: 3px; }
.dupli .w { width: 53px; margin-right: 8px; flex: none; }
.dupli .w:nth-child(2) { width: 52px; }
.vecs { display: flex; gap: 8px; margin: 6px 0 0 3px; }
.vecs > div { width: 174px; }
.vecs label { display: block; height: 19px; line-height: 22px; padding-left: 7px; letter-spacing: -.6px; }
.vec { border: 1px solid #2a2a2a; border-radius: 9px; overflow: hidden; }
.vec .num { height: 19px; padding-top: 2px; }
.vec .num + .num { border-top: 1px solid #2a2a2a; height: 20px; padding-top: 1px; }
.props > .scroll { top: 5px; height: 531px; }
.props .thumb { margin-top: 115px; height: 239px; }

.taskbar { height: 40px; flex: none; display: flex; background: linear-gradient(90deg, #090909 48px, #2f2f2f 392px, #2e2b2a 700px, #303130 980px, #292b2b 1080px, #080808 1200px, #050505); color: #fff; }
.start { width: 48px; display: grid; place-items: center; }
.find { width: 344px; background: #f2f2f2; border-top: 1px solid #ddd; display: flex; align-items: center; padding: 0 14px 0 9px; color: #333; font: 14px "Noto Sans", "Open Sans", sans-serif; letter-spacing: -.07px; }
.find span { margin: 0 auto 0 9px; }
.apps { display: flex; padding-left: 3px; gap: 1px; }
.app { width: 48px; height: 40px; position: relative; display: grid; place-items: center; }
.app .ic { width: 24px; height: 24px; }
.app.active { background: #5a5c5c; }
.app.open::after { content: ""; position: absolute; bottom: 0; left: 4px; width: 40px; height: 2px; background: #76b9ed; }
.app.active::after { left: 0; width: 48px; }
.tray { margin-left: auto; display: flex; align-items: center; width: 235px; position: relative; }
.tray > svg:nth-child(2) { margin-left: 19px; }
.tray > svg:nth-child(3) { margin-left: 18px; }
.tray > svg:nth-child(4) { margin-left: 14px; }
.clockt { width: 66px; margin-left: 8px; display: flex; flex-direction: column; text-align: center; font: 12px/18px "Noto Sans", "Open Sans", sans-serif; letter-spacing: -.35px; margin-top: -1px; }
.note { position: relative; margin-left: 10px; width: 26px; height: 26px; margin-top: 4px; }
.note svg { display: block; }
.note span { position: absolute; left: 8px; top: 8px; width: 17px; height: 17px; border-radius: 50%; background: #333; border: 1px solid #999; font: 12px/15px "Noto Sans", sans-serif; text-align: center; }
.tray::after { content: ""; position: absolute; right: 4px; top: 0; width: 1px; height: 40px; background: #555; }
</style>
